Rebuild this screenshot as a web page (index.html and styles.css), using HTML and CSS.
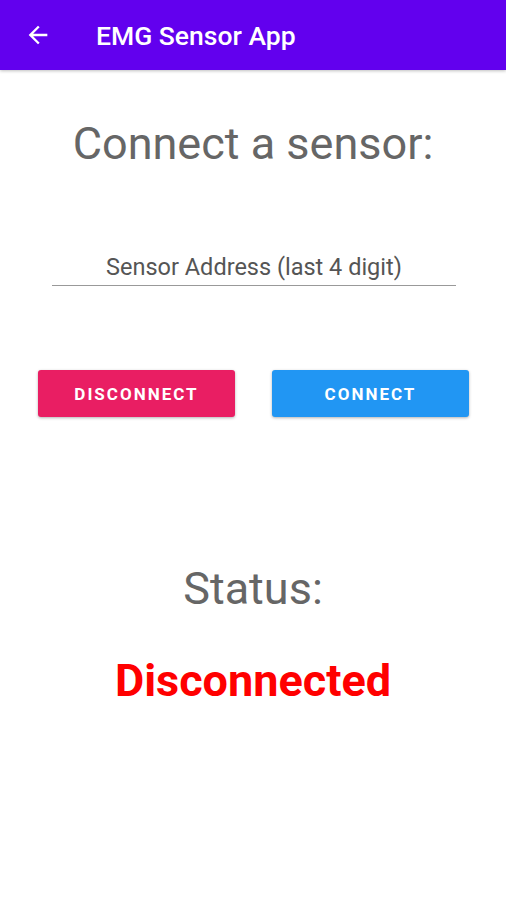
FILE: index.html
```html
<!DOCTYPE html>
<html lang="en">
<head>
    <meta charset="UTF-8">
    <title>EMG Sensor App</title>
    <link rel="stylesheet" href="styles.css">
</head>
<body>
    <header class="app-bar">
        <button class="back-btn" aria-label="Back">
            <svg width="28" height="28" viewBox="0 0 24 24">
                <path d="M20 11H7.83l5.59-5.59L12 4l-8 8 8 8 1.41-1.41L7.83 13H20v-2z" fill="#fff"/>
            </svg>
        </button>
        <h1 class="app-title">EMG Sensor App</h1>
    </header>

    <main class="content">
        <h2 class="heading">Connect a sensor:</h2>

        <div class="field">
            <input type="text" class="address-input" placeholder="Sensor Address (last 4 digit)">
        </div>

        <div class="button-row">
            <button class="btn btn-disconnect">DISCONNECT</button>
            <button class="btn btn-connect">CONNECT</button>
        </div>

        <h2 class="heading status-label">Status:</h2>
        <p class="status-value">Disconnected</p>
    </main>
</body>
</html>
```

FILE: styles.css
```css
* {
    margin: 0;
    padding: 0;
    box-sizing: border-box;
}

body {
    font-family: Roboto, "Liberation Sans", sans-serif;
    background-color: #fff;
    color: #666;
}

/* Top app bar */
.app-bar {
    height: 70px;
    background-color: #6200ee;
    display: flex;
    align-items: center;
    padding-left: 24px;
    box-shadow: 0 1px 3px rgba(0, 0, 0, 0.25);
}

.back-btn {
    background: none;
    border: none;
    width: 28px;
    height: 28px;
    display: flex;
    align-items: center;
    justify-content: center;
    margin-right: 44px;
}

.app-title {
    color: #fff;
    font-size: 26.5px;
    font-weight: 500;
}

/* Main content */
.content {
    display: flex;
    flex-direction: column;
    align-items: center;
}

.heading {
    font-size: 45px;
    font-weight: 400;
    color: #666;
    margin-top: 48px;
    line-height: 52px;
}

.field {
    align-self: stretch;
    margin: 83px 50px 0 52px;
}

.address-input {
    width: 100%;
    border: none;
    border-bottom: 1.5px solid #999;
    font-family: inherit;
    font-size: 23.5px;
    line-height: 28px;
    text-align: center;
    padding: 0 0 4px;
    outline: none;
    background: none;
}

.address-input::placeholder {
    color: #555;
}

.button-row {
    align-self: stretch;
    display: flex;
    gap: 37px;
    margin: 84px 37px 0 38px;
}

.btn {
    flex: 1;
    height: 47px;
    border: none;
    border-radius: 3px;
    color: #fff;
    font-family: inherit;
    font-size: 17px;
    font-weight: 700;
    letter-spacing: 2px;
    box-shadow: 0 1px 3px rgba(0, 0, 0, 0.3);
}

.btn-disconnect {
    background-color: #e91e63;
}

.btn-connect {
    background-color: #2196f3;
}

.status-label {
    margin-top: 146px;
}

.status-value {
    color: #f00;
    font-size: 45px;
    line-height: 52px;
    font-weight: 700;
    margin-top: 40px;
}
```
